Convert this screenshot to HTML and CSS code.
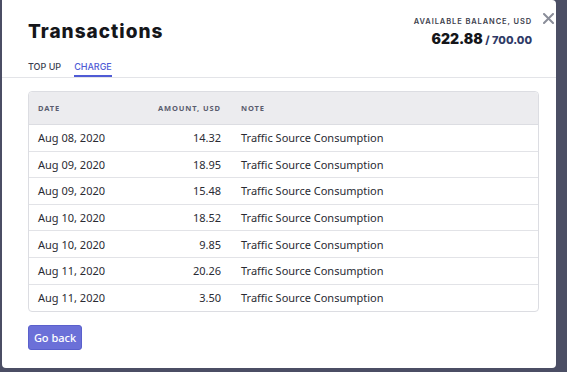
FILE: index.html
```html
<!DOCTYPE html>
<html>
<head>
  <title>Transactions</title>
  <link rel="stylesheet" href="styles.css">
</head>
<body>
  <div class="modal">
    <div class="modal-head">
      <div class="head-row">
        <h1>Transactions</h1>
        <div class="balance">
          <div class="balance-label">AVAILABLE BALANCE, USD</div>
          <div class="balance-value"><b>622.88</b> / <span>700.00</span></div>
        </div>
      </div>
      <button class="close" aria-label="Close">
        <svg width="11" height="11" viewBox="0 0 11 11"><path d="M1 1L10 10M10 1L1 10" stroke="#8a8d99" stroke-width="2" stroke-linecap="round"/></svg>
      </button>
      <div class="tabs">
        <div class="tab">TOP UP</div>
        <div class="tab active">CHARGE</div>
      </div>
    </div>

    <div class="modal-body">
      <table class="tx">
        <thead>
          <tr><th class="c-date">DATE</th><th class="c-amount">AMOUNT, USD</th><th class="c-note">NOTE</th></tr>
        </thead>
        <tbody>
          <tr><td>Aug 08, 2020</td><td class="c-amount">14.32</td><td class="c-note">Traffic Source Consumption</td></tr>
          <tr><td>Aug 09, 2020</td><td class="c-amount">18.95</td><td class="c-note">Traffic Source Consumption</td></tr>
          <tr><td>Aug 09, 2020</td><td class="c-amount">15.48</td><td class="c-note">Traffic Source Consumption</td></tr>
          <tr><td>Aug 10, 2020</td><td class="c-amount">18.52</td><td class="c-note">Traffic Source Consumption</td></tr>
          <tr><td>Aug 10, 2020</td><td class="c-amount">9.85</td><td class="c-note">Traffic Source Consumption</td></tr>
          <tr><td>Aug 11, 2020</td><td class="c-amount">20.26</td><td class="c-note">Traffic Source Consumption</td></tr>
          <tr><td>Aug 11, 2020</td><td class="c-amount">3.50</td><td class="c-note">Traffic Source Consumption</td></tr>
        </tbody>
      </table>
      <button class="btn">Go back</button>
    </div>
  </div>
</body>
</html>
```

FILE: styles.css
```css
body {
  margin: 0;
  background: #4b4e64;
  font-family: "Noto Sans", sans-serif;
  color: #2a2b33;
}
.modal {
  position: relative;
  margin-left: 2px;
  width: 554px;
  height: 368px;
  background: #fff;
  border-radius: 0 4px 4px 4px;
}
.modal-head {
  padding: 16px 24px 0 26px;
  border-bottom: 1px solid #e3e4e8;
}
.head-row {
  display: flex;
  justify-content: space-between;
  align-items: flex-start;
  height: 45px;
}
h1 {
  margin: 0;
  padding-top: 4px;
  font-family: Inter, sans-serif;
  font-weight: 800;
  font-size: 19px;
  line-height: 23px;
  color: #15161a;
  letter-spacing: 1px;
}
.balance {
  text-align: right;
  padding-top: 1px;
}
.balance-label {
  font-family: Inter, sans-serif;
  font-size: 7.5px;
  line-height: 10px;
  font-weight: 600;
  letter-spacing: 0.9px;
  color: #3c3e4c;
}
.balance-value {
  margin-top: 3px;
  font-family: Inter, sans-serif;
  font-size: 11px;
  line-height: 17px;
  font-weight: 800;
  color: #2f3a66;
}
.balance-value b {
  font-size: 14px;
  color: #15161a;
}
.close {
  position: absolute;
  top: 12px;
  right: 2px;
  border: 0;
  background: none;
  padding: 0;
  cursor: pointer;
}
.tabs {
  display: flex;
  gap: 13px;
}
.tab {
  font-family: Inter, sans-serif;
  font-size: 9px;
  line-height: 11px;
  font-weight: 500;
  color: #3b3e4f;
  padding-bottom: 3px;
  border-bottom: 2px solid transparent;
}
.tab.active {
  color: #4f5bd5;
  border-bottom-color: #4f5bd5;
}
.modal-body {
  padding: 13px 17px 0 26px;
}
.tx {
  width: 100%;
  table-layout: fixed;
  border-collapse: separate;
  border-spacing: 0;
  border: 1px solid #dcdde2;
  border-radius: 4px;
  font-size: 11px;
}
.tx th, .tx td {
  box-sizing: border-box;
  padding: 0 0 0 9px;
  white-space: nowrap;
}
.tx th {
  background: #ececef;
  height: 33px;
  font-size: 7.5px;
  font-weight: 700;
  letter-spacing: 0.9px;
  color: #5a5c6e;
  text-align: left;
  border-bottom: 1px solid #dcdde2;
}
.tx th:first-child { border-top-left-radius: 4px; }
.tx th:last-child { border-top-right-radius: 4px; }
.tx td {
  height: 26.6px;
  border-bottom: 1px solid #e2e3e7;
  color: #2a2b33;
}
.tx tbody tr:last-child td { border-bottom: 0; }
.tx .c-date { width: 100px; }
.tx .c-amount { width: 92px; padding: 0; text-align: right; }
.tx .c-note { padding-left: 20px; }
.btn {
  margin-top: 13px;
  background: #6b70d8;
  color: #fff;
  border: 1px solid #5a60cc;
  border-radius: 3px;
  font-family: "Noto Sans", sans-serif;
  font-size: 11px;
  font-weight: 500;
  height: 25px;
  width: 54px;
  padding: 0;
  cursor: pointer;
}
```
